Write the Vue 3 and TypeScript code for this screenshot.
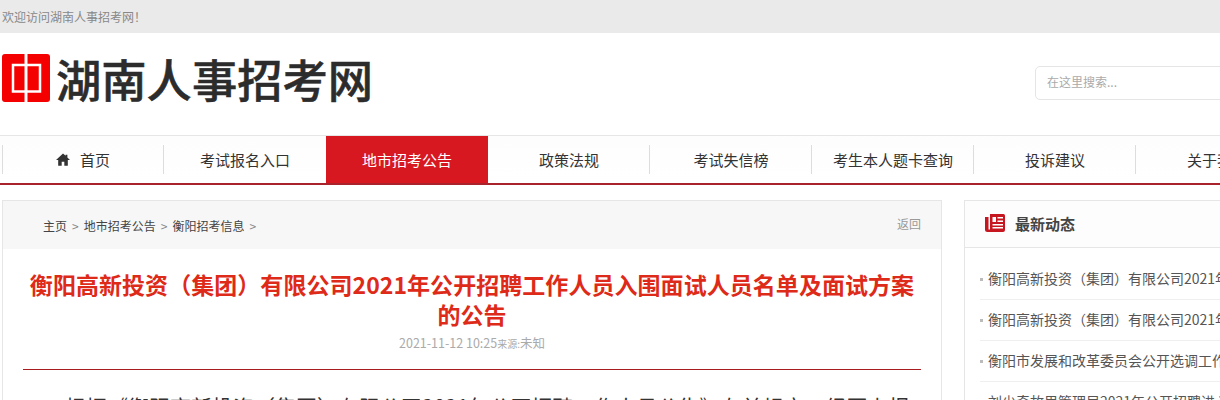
<script setup lang="ts">
const navItems = ['考试报名入口', '地市招考公告', '政策法规', '考试失信榜', '考生本人题卡查询', '投诉建议', '关于我们']

const newsItems = [
  '衡阳高新投资（集团）有限公司2021年公开招聘工作人员',
  '衡阳高新投资（集团）有限公司2021年公开招聘工作人员',
  '衡阳市发展和改革委员会公开选调工作人员公告',
  '刘少奇故里管理局2021年公开招聘进入面试公告',
]
</script>

<template>
  <div class="page">
    <div class="top-bar">欢迎访问湖南人事招考网！</div>

    <header class="header">
      <div class="logo">
        <svg class="logo-mark" viewBox="0 0 48 48" width="48" height="48">
          <rect width="48" height="48" rx="3" fill="#f40000" />
          <rect x="11" y="11" width="27" height="26.500" fill="none" stroke="#fff" stroke-width="2.500" />
          <path d="M22.500 0h3v48h-3z" fill="#fff" />
        </svg>
        <span class="logo-text">湖南人事招考网</span>
      </div>
      <div class="search"><span>在这里搜索...</span></div>
    </header>

    <nav class="nav">
      <a class="nav-item">
        <svg class="home-icon" viewBox="0 0 16 14" width="14" height="13">
          <path d="M8 0 0 7.500h2.500V14h4V9.500h3V14h4V7.500H16l-3-2.800V1.500h-2v1.300z" fill="#333" />
        </svg>
        首页
      </a>
      <a v-for="(item, i) in navItems" :key="item" class="nav-item" :class="{ active: i === 1 }">{{ item }}</a>
    </nav>

    <main class="main">
      <section class="article">
        <div class="crumbs">
          <div class="crumb-links">
            <a>主页</a><i>&gt;</i><a>地市招考公告</a><i>&gt;</i><a>衡阳招考信息</a><i>&gt;</i>
          </div>
          <a class="back">返回</a>
        </div>
        <h1 class="title">衡阳高新投资（集团）有限公司2021年公开招聘工作人员入围面试人员名单及面试方案的公告</h1>
        <div class="meta">2021-11-12 10:25<small>来源:</small>未知</div>
        <div class="content">
          <p>根据《衡阳高新投资（集团）有限公司2021年公开招聘工作人员公告》有关规定，经园上报</p>
        </div>
      </section>

      <aside class="side">
        <div class="side-head">
          <svg class="side-icon" viewBox="0 0 20 18" width="20" height="18">
            <path d="M0 3h3.500v12.500H5V18H2.500A2.500 2.500 0 0 1 0 15.500z" fill="#c6161f" />
            <path d="M5 0h13.500A1.500 1.500 0 0 1 20 1.500V16a2 2 0 0 1-2 2H5z" fill="#c6161f" />
            <path d="M7.500 3h3.500v5H7.500zM12.500 3H18v1.500h-5.500zM12.500 6.500H18V8h-5.500zM7.500 10H18v1.500H7.500zM7.500 13H18v1.500H7.500z" fill="#fff" />
          </svg>
          <span>最新动态</span>
        </div>
        <ul class="news">
          <li v-for="(item, i) in newsItems" :key="i">{{ item }}</li>
        </ul>
      </aside>
    </main>
  </div>
</template>

<style>
html, body {
  margin: 0;
  background: #fff;
  overflow: hidden;
}
</style>

<style scoped>
.page {
  width: 1220px;
  height: 400px;
  overflow: hidden;
  font-family: "Noto Sans CJK SC", "Noto Sans", sans-serif;
  color: #333;
}

.top-bar {
  height: 33px;
  line-height: 33px;
  padding-left: 2px;
  background: #eaeaea;
  color: #888;
  font-size: 12px;
}

.header {
  height: 102px;
  display: flex;
  align-items: flex-start;
  justify-content: space-between;
  padding-left: 2px;
}

.logo {
  display: flex;
  align-items: center;
  gap: 6px;
  margin-top: 21px;
  height: 48px;
}

.logo-text {
  font-size: 45.300px;
  font-weight: 500;
  line-height: 48px;
  color: #2c2c2c;
  white-space: nowrap;
  -webkit-text-stroke: 0.5px #2c2c2c;
}

.search {
  width: 240px;
  height: 34px;
  margin-top: 33px;
  margin-right: -55px;
  flex: none;
  box-sizing: border-box;
  border: 1px solid #e5e5e5;
  border-radius: 5px;
  padding-left: 11px;
  line-height: 30px;
  font-size: 12px;
  color: #aaa;
}

.nav {
  height: 50px;
  box-sizing: border-box;
  display: flex;
  align-items: center;
  padding-left: 2px;
  border-top: 1px solid #e6e6e6;
  border-bottom: 2px solid #a8232b;
  background: linear-gradient(#fdfdfd, #fff);
}

.nav-item {
  flex: none;
  width: 162px;
  height: 47px;
  box-sizing: border-box;
  display: flex;
  align-items: center;
  justify-content: center;
  gap: 10px;
  font-size: 15px;
  color: #333;
  white-space: nowrap;
  position: relative;
}

.nav-item::before {
  content: '';
  position: absolute;
  left: -1px;
  top: 9px;
  height: 29px;
  width: 1px;
  background: #ddd;
}

.nav-item:first-child::before {
  left: 0;
}

.nav-item.active {
  background: #d71820;
  color: #fff;
}

.nav-item.active::before,
.nav-item.active + .nav-item::before {
  display: none;
}

.main {
  display: flex;
  align-items: flex-start;
  gap: 22px;
  padding: 15px 0 0 2px;
}

.article {
  flex: none;
  width: 940px;
  box-sizing: border-box;
  border: 1px solid #e6e6e6;
  border-bottom: 0;
  height: 300px;
}

.crumbs {
  height: 48px;
  display: flex;
  align-items: center;
  justify-content: space-between;
  padding: 0 20px 0 40px;
  background: #f7f7f7;
  font-size: 12px;
  color: #444;
}

.crumb-links i {
  font-style: normal;
  color: #888;
  margin: 0 5px;
}

.back {
  color: #999;
  margin-bottom: 4px;
}

.title {
  margin: 20px 20px 0;
  font-size: 23px;
  letter-spacing: 0.05px;
  line-height: 30px;
  font-weight: 700;
  text-align: center;
  color: #de2a18;
}

.meta {
  margin: 5px 20px 0;
  padding-bottom: 16px;
  border-bottom: 1px solid #a81c20;
  text-align: center;
  font-size: 12.500px;
  line-height: 18px;
  color: #aaa;
}

.meta small {
  font-size: 10px;
}

.content {
  padding: 0 20px;
  font-size: 21px;
  line-height: 30px;
  color: #333;
  white-space: nowrap;
}

.content p {
  margin: 21px 0 0;
  text-indent: 2em;
}

.side {
  flex: none;
  width: 300px;
  box-sizing: border-box;
  border: 1px solid #e6e6e6;
  height: 300px;
}

.side-head {
  height: 46px;
  box-sizing: content-box;
  display: flex;
  align-items: center;
  gap: 10px;
  padding-left: 20px;
  border-bottom: 1px solid #e6e6e6;
  background: #fdfdfd;
  font-size: 15px;
  font-weight: 700;
  color: #444;
}

.side-icon,
.side-head span {
  margin-bottom: 2px;
}

.news {
  list-style: none;
  margin: 0;
  padding: 11px 0 0 15px;
}

.news li {
  height: 40px;
  line-height: 38px;
  border-bottom: 1px solid #efefef;
  padding-left: 8px;
  font-size: 14px;
  color: #555;
  white-space: nowrap;
  position: relative;
}

.news li::before {
  content: '';
  position: absolute;
  left: 0;
  top: 19px;
  width: 3px;
  height: 3px;
  background: #bbb;
}
</style>
